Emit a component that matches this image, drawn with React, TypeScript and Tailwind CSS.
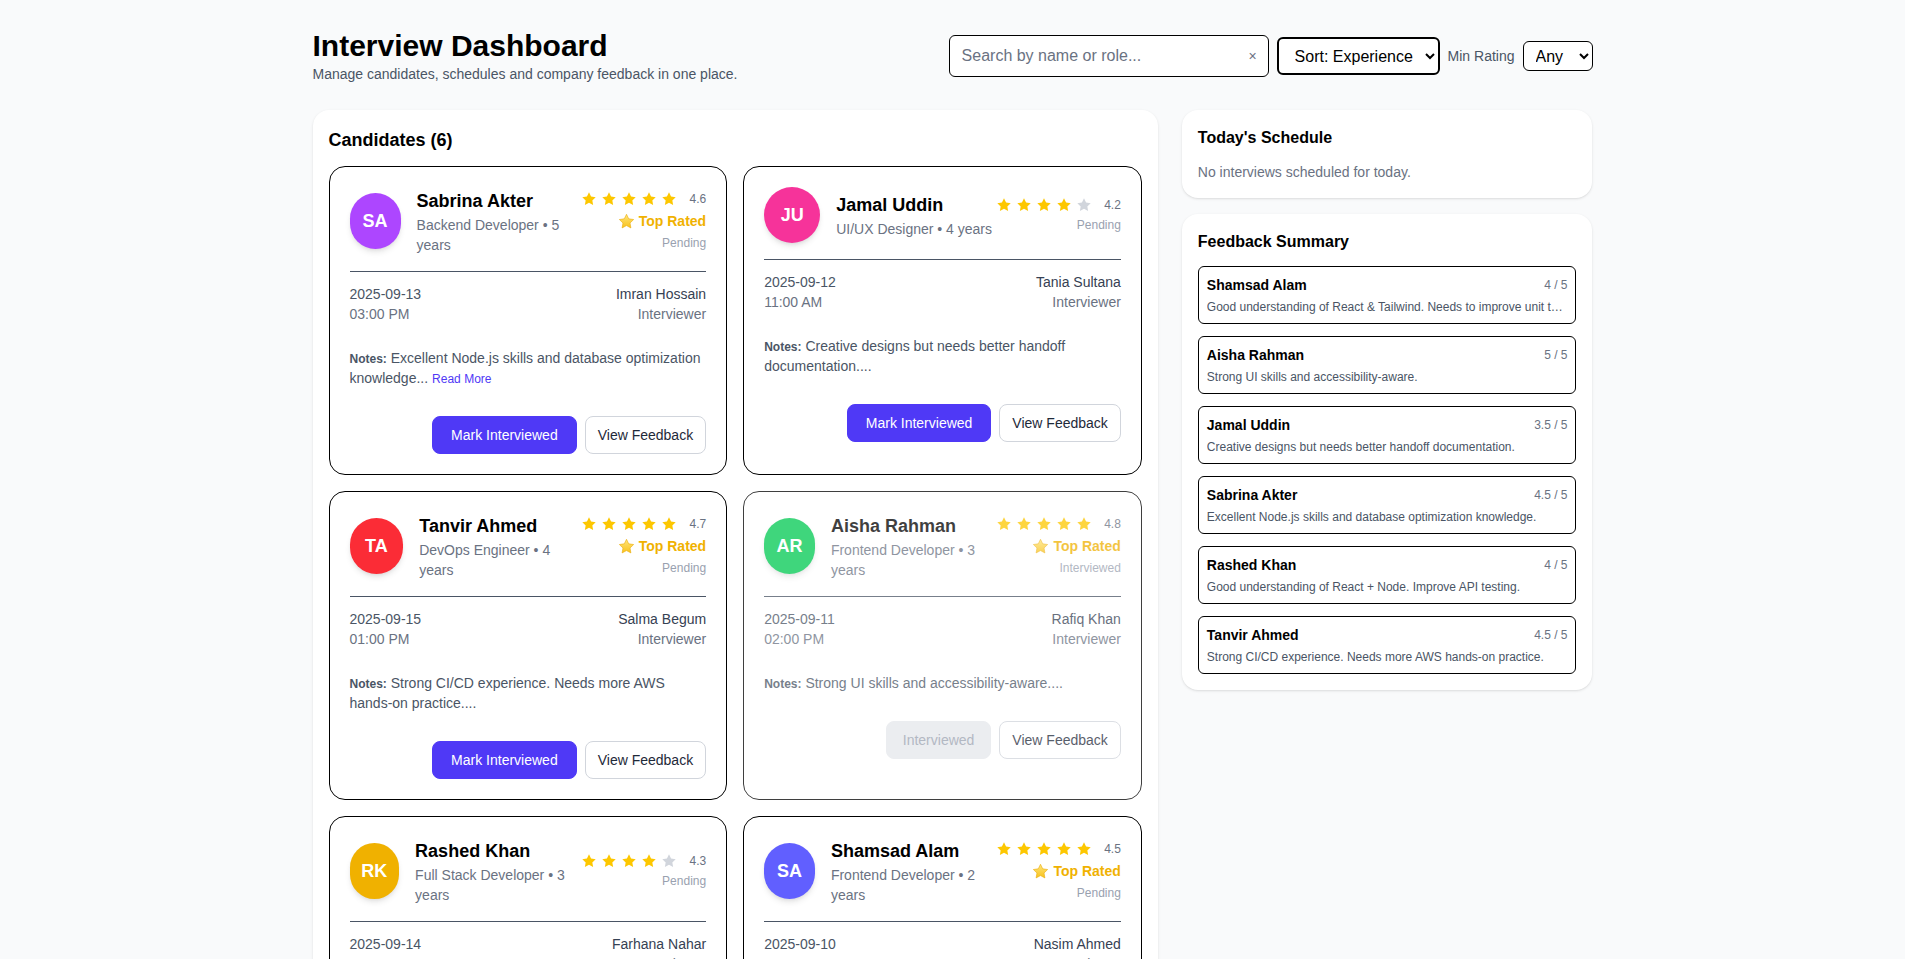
import React, { useState } from 'react';
import clsx from 'clsx';

type Candidate = {
  id: number;
  name: string;
  initials: string;
  color: string;
  role: string;
  years: number;
  rating: number;
  status: 'Pending' | 'Interviewed';
  date: string;
  time: string;
  interviewer: string;
  notes: string;
  readMore?: boolean;
};

const candidates: Candidate[] = [
  { id: 1, name: 'Sabrina Akter', initials: 'SA', color: 'bg-purple-500', role: 'Backend Developer', years: 5, rating: 4.6, status: 'Pending', date: '2025-09-13', time: '03:00 PM', interviewer: 'Imran Hossain', notes: 'Excellent Node.js skills and database optimization knowledge...', readMore: true },
  { id: 2, name: 'Jamal Uddin', initials: 'JU', color: 'bg-pink-500', role: 'UI/UX Designer', years: 4, rating: 4.2, status: 'Pending', date: '2025-09-12', time: '11:00 AM', interviewer: 'Tania Sultana', notes: 'Creative designs but needs better handoff documentation....' },
  { id: 3, name: 'Tanvir Ahmed', initials: 'TA', color: 'bg-red-500', role: 'DevOps Engineer', years: 4, rating: 4.7, status: 'Pending', date: '2025-09-15', time: '01:00 PM', interviewer: 'Salma Begum', notes: 'Strong CI/CD experience. Needs more AWS hands-on practice....' },
  { id: 4, name: 'Aisha Rahman', initials: 'AR', color: 'bg-green-500', role: 'Frontend Developer', years: 3, rating: 4.8, status: 'Interviewed', date: '2025-09-11', time: '02:00 PM', interviewer: 'Rafiq Khan', notes: 'Strong UI skills and accessibility-aware....' },
  { id: 5, name: 'Rashed Khan', initials: 'RK', color: 'bg-yellow-500', role: 'Full Stack Developer', years: 3, rating: 4.3, status: 'Pending', date: '2025-09-14', time: '09:30 AM', interviewer: 'Farhana Nahar', notes: 'Good understanding of React + Node. Improve API testing....' },
  { id: 6, name: 'Shamsad Alam', initials: 'SA', color: 'bg-indigo-500', role: 'Frontend Developer', years: 2, rating: 4.5, status: 'Pending', date: '2025-09-10', time: '10:30 AM', interviewer: 'Nasim Ahmed', notes: 'Good understanding of React & Tailwind. Needs to improve unit t...', readMore: true },
];

const feedback = [
  { name: 'Shamsad Alam', score: '4 / 5', text: 'Good understanding of React & Tailwind. Needs to improve unit testing.' },
  { name: 'Aisha Rahman', score: '5 / 5', text: 'Strong UI skills and accessibility-aware.' },
  { name: 'Jamal Uddin', score: '3.5 / 5', text: 'Creative designs but needs better handoff documentation.' },
  { name: 'Sabrina Akter', score: '4.5 / 5', text: 'Excellent Node.js skills and database optimization knowledge.' },
  { name: 'Rashed Khan', score: '4 / 5', text: 'Good understanding of React + Node. Improve API testing.' },
  { name: 'Tanvir Ahmed', score: '4.5 / 5', text: 'Strong CI/CD experience. Needs more AWS hands-on practice.' },
];

const StarIcon = ({ className }: { className?: string }) => (
  <svg viewBox="0 0 24 24" className={className} fill="currentColor">
    <path d="M12 2l3.09 6.26L22 9.27l-5 4.87 1.18 6.88L12 17.77l-6.18 3.25L7 14.14 2 9.27l6.91-1.01L12 2z" />
  </svg>
);

// stands in for the ⭐ emoji
const EmojiStar = () => (
  <svg viewBox="0 0 24 24" className="w-[17px] h-[17px]">
    <defs>
      <linearGradient id="gold" x1="0" y1="0" x2="0" y2="1">
        <stop offset="0" stopColor="#ffe57a" />
        <stop offset="1" stopColor="#f8c21c" />
      </linearGradient>
    </defs>
    <path
      d="M12 1.8l3.1 6.4 7 1-5.1 4.9 1.2 7L12 17.8l-6.2 3.3 1.2-7-5.1-4.9 7-1L12 1.8z"
      fill="url(#gold)"
      stroke="#e9a800"
      strokeWidth="0.8"
      strokeLinejoin="round"
    />
  </svg>
);

const CandidateCard = ({ c }: { c: Candidate }) => {
  const filled = Math.round(c.rating);
  const done = c.status === 'Interviewed';

  return (
    <div className={clsx('border rounded-2xl p-5 bg-white', done && 'opacity-75')}>
      <div className="flex items-center justify-between">
        <div className="flex items-center gap-4">
          <div className={clsx('w-14 h-14 rounded-full flex items-center justify-center text-white text-lg font-semibold shadow-md', c.color)}>
            {c.initials}
          </div>
          <div>
            <h3 className="text-lg font-semibold">{c.name}</h3>
            <p className="text-sm text-gray-500">
              {c.role} • {c.years} years
            </p>
          </div>
        </div>
        <div className="shrink-0 flex flex-col items-end">
          <div className="flex items-center gap-1">
            {[1, 2, 3, 4, 5].map(i => (
              <StarIcon key={i} className={clsx('w-4 h-4', i <= filled ? 'text-yellow-400' : 'text-gray-300')} />
            ))}
            <span className="ml-2 text-xs text-gray-500">{c.rating}</span>
          </div>
          {c.rating >= 4.5 && (
            <div className="mt-1 flex items-center gap-1 text-sm font-semibold text-yellow-500">
              <EmojiStar />
              <span>Top Rated</span>
            </div>
          )}
          <span className="mt-1 text-xs text-gray-400">{c.status}</span>
        </div>
      </div>

      <hr className="mt-4 border-gray-600" />

      <div className="mt-3 flex justify-between text-sm">
        <div>
          <p className="font-medium text-gray-600">{c.date}</p>
          <p className="text-gray-500">{c.time}</p>
        </div>
        <div className="text-right">
          <p className="font-medium text-gray-700">{c.interviewer}</p>
          <p className="text-gray-500">Interviewer</p>
        </div>
      </div>

      <p className="mt-6 text-sm text-gray-600">
        <span className="text-xs font-semibold">Notes:</span> {c.notes}
        {c.readMore && <button className="ml-1 text-xs font-medium text-indigo-600">Read More</button>}
      </p>

      <div className="mt-7 flex justify-end gap-2">
        {done ? (
          <button disabled className="px-4 py-2 rounded-lg border border-gray-200 bg-gray-200 text-sm text-gray-400">
            Interviewed
          </button>
        ) : (
          <button className="px-[18px] py-2 rounded-lg border border-indigo-600 bg-indigo-600 text-sm font-medium text-white">
            Mark Interviewed
          </button>
        )}
        <button className="px-3 py-2 rounded-lg border border-gray-300 bg-white text-sm text-gray-800">
          View Feedback
        </button>
      </div>
    </div>
  );
};

export default function App() {
  const [query, setQuery] = useState('');

  return (
    <div className="min-h-screen bg-gray-50 text-black font-['Liberation_Sans',Arial,sans-serif]">
      <div className="max-w-7xl mx-auto pt-7 pb-10">
        {/* Header */}
        <header className="flex items-center justify-between">
          <div>
            <h1 className="text-3xl font-bold">Interview Dashboard</h1>
            <p className="text-sm text-gray-600">Manage candidates, schedules and company feedback in one place.</p>
          </div>
          <div className="flex items-center gap-2">
            <div className="relative w-80">
              <input
                value={query}
                onChange={e => setQuery(e.target.value)}
                placeholder="Search by name or role..."
                className="w-full border rounded-md bg-white px-3 py-2 pr-8 text-base placeholder:text-gray-500"
              />
              <button className="absolute right-3 top-1/2 -translate-y-1/2 text-sm text-gray-500">×</button>
            </div>
            <select className="h-[38px] w-[163px] border-2 rounded-md bg-white pl-3 pr-1 text-base">
              <option>Sort: Experience</option>
              <option>Sort: Rating</option>
              <option>Sort: Date</option>
            </select>
            <span className="text-sm text-gray-600">Min Rating</span>
            <select className="h-[30px] w-[70px] border rounded-md bg-white pl-2 pr-1 text-base">
              <option>Any</option>
              <option>4+</option>
              <option>4.5+</option>
            </select>
          </div>
        </header>

        <div className="mt-[26px] grid grid-cols-3 gap-6 items-start">
          {/* Candidates */}
          <section className="col-span-2 bg-white rounded-2xl shadow-sm p-4">
            <h2 className="mb-3 text-lg font-semibold">Candidates ({candidates.length})</h2>
            <div className="grid grid-cols-2 gap-4">
              {candidates.map(c => (
                <CandidateCard key={c.id} c={c} />
              ))}
            </div>
          </section>

          {/* Sidebar */}
          <aside className="flex flex-col gap-4">
            <div className="bg-white rounded-2xl shadow-sm p-4">
              <h2 className="text-base font-semibold">Today's Schedule</h2>
              <p className="mt-3 text-sm text-gray-500">No interviews scheduled for today.</p>
            </div>
            <div className="bg-white rounded-2xl shadow-sm p-4">
              <h2 className="text-base font-semibold">Feedback Summary</h2>
              <ul className="mt-3 space-y-3">
                {feedback.map(f => (
                  <li key={f.name} className="border rounded-md p-2">
                    <div className="flex items-center justify-between">
                      <span className="text-sm font-semibold">{f.name}</span>
                      <span className="text-xs text-gray-500">{f.score}</span>
                    </div>
                    <p className="mt-1 text-xs text-gray-600 truncate">{f.text}</p>
                  </li>
                ))}
              </ul>
            </div>
          </aside>
        </div>
      </div>
    </div>
  );
}
